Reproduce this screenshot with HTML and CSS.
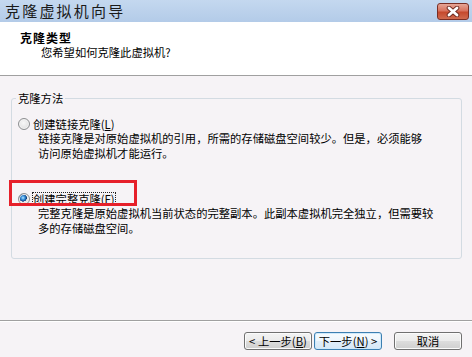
FILE: index.html
```html
<!DOCTYPE html>
<html lang="zh">
<head>
    <meta charset="UTF-8">
    <meta name="viewport" content="width=device-width, initial-scale=1.0">
    <title>克隆虚拟机向导</title>
    <link rel="stylesheet" href="styles.css">
</head>
<body>
    <div class="window">
        <div class="titlebar">
            <span class="title">克隆虚拟机向导</span>
            <span class="close">
                <svg width="14" height="11" viewBox="0 0 14 11">
                    <path d="M3 2 L11 9 M11 2 L3 9" stroke="#6e2a20" stroke-width="4.6" stroke-linecap="round"/>
                    <path d="M3 2 L11 9 M11 2 L3 9" stroke="#ffffff" stroke-width="2.8" stroke-linecap="round"/>
                </svg>
            </span>
        </div>

        <div class="header">
            <div class="header-title">克隆类型</div>
            <div class="header-sub">您希望如何克隆此虚拟机?</div>
        </div>

        <div class="content">
            <fieldset class="group">
                <legend>克隆方法</legend>

                <div class="option">
                    <div class="option-label">
                        <span class="radio"></span>
                        <span>创建链接克隆(<u>L</u>)</span>
                    </div>
                    <div class="option-desc">
                        链接克隆是对原始虚拟机的引用，所需的存储磁盘空间较少。但是，必须能够<br>
                        访问原始虚拟机才能运行。
                    </div>
                </div>

                <div class="option option-second">
                    <div class="option-label">
                        <span class="radio checked"></span>
                        <span class="focus">创建完整克隆(<u>F</u>)</span>
                    </div>
                    <div class="option-desc">
                        完整克隆是原始虚拟机当前状态的完整副本。此副本虚拟机完全独立，但需要较<br>
                        多的存储磁盘空间。
                    </div>
                </div>
            </fieldset>
        </div>

        <div class="footer">
            <button class="btn">&lt; 上一步(<u>B</u>)</button>
            <button class="btn btn-default">下一步(<u>N</u>) &gt;</button>
            <button class="btn btn-cancel">取消</button>
        </div>

        <div class="highlight"></div>
    </div>
</body>
</html>
```

FILE: styles.css
```css
:root {
    --body-bg: #f6f3f6;
    --line-color: #a0a0a0;
    --group-border: #d3dbe2;
}

* {
    margin: 0;
    padding: 0;
    box-sizing: border-box;
}

body {
    font-family: 'Noto Sans CJK SC', 'Liberation Sans', sans-serif;
    font-size: 11.3px;
    color: #000;
    background: var(--body-bg);
}

.window {
    position: relative;
    width: 472px;
    height: 357px;
    overflow: hidden;
    background: var(--body-bg);
}

u {
    text-decoration: underline;
}

/* title bar */
.titlebar {
    height: 22px;
    display: flex;
    align-items: center;
    justify-content: space-between;
    padding: 0 3px 0 5px;
    background: linear-gradient(#c4d8ef, #b3cbe8);
}

.title {
    font-size: 15px;
    line-height: 22px;
    letter-spacing: 2.2px;
    color: #1a1a1a;
}

.close {
    width: 32px;
    height: 17px;
    display: flex;
    align-items: center;
    justify-content: center;
    border: 1px solid #7a2e24;
    border-radius: 3px;
    background: linear-gradient(#e6a596, #d8735e 45%, #c5492d 55%, #cf6a4e);
}

/* header */
.header {
    height: 54px;
    background: #fff;
    border-bottom: 1px solid var(--line-color);
    padding: 8px 0 0 20px;
}

.header-title {
    font-weight: bold;
    font-size: 12px;
    line-height: 15px;
    letter-spacing: 1px;
}

.header-sub {
    line-height: 15px;
    padding-left: 21px;
}

/* content */
.content {
    height: 244px;
    padding: 16px 10px 0 11px;
}

.group {
    border: 1px solid var(--group-border);
    border-radius: 3px;
    padding: 0 0 23px 0;
    min-width: 0;
}

.group legend {
    margin-left: 4px;
    padding: 0 2px;
    line-height: 12px;
}

.option {
    margin-top: 12px;
}

.option-second {
    margin-top: 31px;
}

.option-label {
    height: 15px;
    display: flex;
    align-items: center;
    padding-left: 6px;
    line-height: 12px;
}

.option-label .radio {
    margin-right: 3px;
}

.focus {
    outline: 1px dotted #222;
    outline-offset: 0;
}

.option-desc {
    padding-left: 26px;
    line-height: 14.5px;
}

/* radio buttons */
.radio {
    width: 12px;
    height: 12px;
    border-radius: 50%;
    border: 1px solid #8d8f91;
    background: radial-gradient(circle at 45% 40%, #f7f7f7 0, #e2e2e2 70%, #d3d3d3 100%);
    box-shadow: inset 0 0 0 1px #f4f4f4;
    flex-shrink: 0;
}

.radio.checked {
    background:
        radial-gradient(circle at 40% 38%, #bfe6ff 0, #4da3e6 1.5px, #1a5ea8 3px, #0f3f7a 3.6px, transparent 4px),
        radial-gradient(circle at 45% 40%, #f7f7f7 0, #e2e2e2 70%, #d3d3d3 100%);
}

/* footer */
.footer {
    height: 37px;
    border-top: 1px solid var(--line-color);
    box-shadow: inset 0 1px 0 #fff;
    display: flex;
    justify-content: flex-end;
    align-items: flex-start;
    padding: 11px 10px 0 0;
}

.btn {
    width: 68px;
    height: 18px;
    font-family: inherit;
    font-size: 11.3px;
    line-height: 14px;
    color: #000;
    border: 1px solid #707070;
    border-radius: 3px;
    background: linear-gradient(#f3f3f3, #ebebeb 50%, #dddddd 50%, #cfcfcf);
    box-shadow: inset 0 0 0 1px #fbfbfb;
    margin-left: 2px;
}

.btn-default {
    border-color: #3c7fb1;
    background: linear-gradient(#f6fbfe, #eef6fc 50%, #e0eef9 50%, #d6e8f6);
    box-shadow: inset 0 0 0 1px #cfe9fb;
}

.btn-cancel {
    margin-left: 12px;
}

/* annotation box */
.highlight {
    position: absolute;
    left: 9px;
    top: 180px;
    width: 128px;
    height: 26px;
    border: 3px solid #e6202a;
}
```
